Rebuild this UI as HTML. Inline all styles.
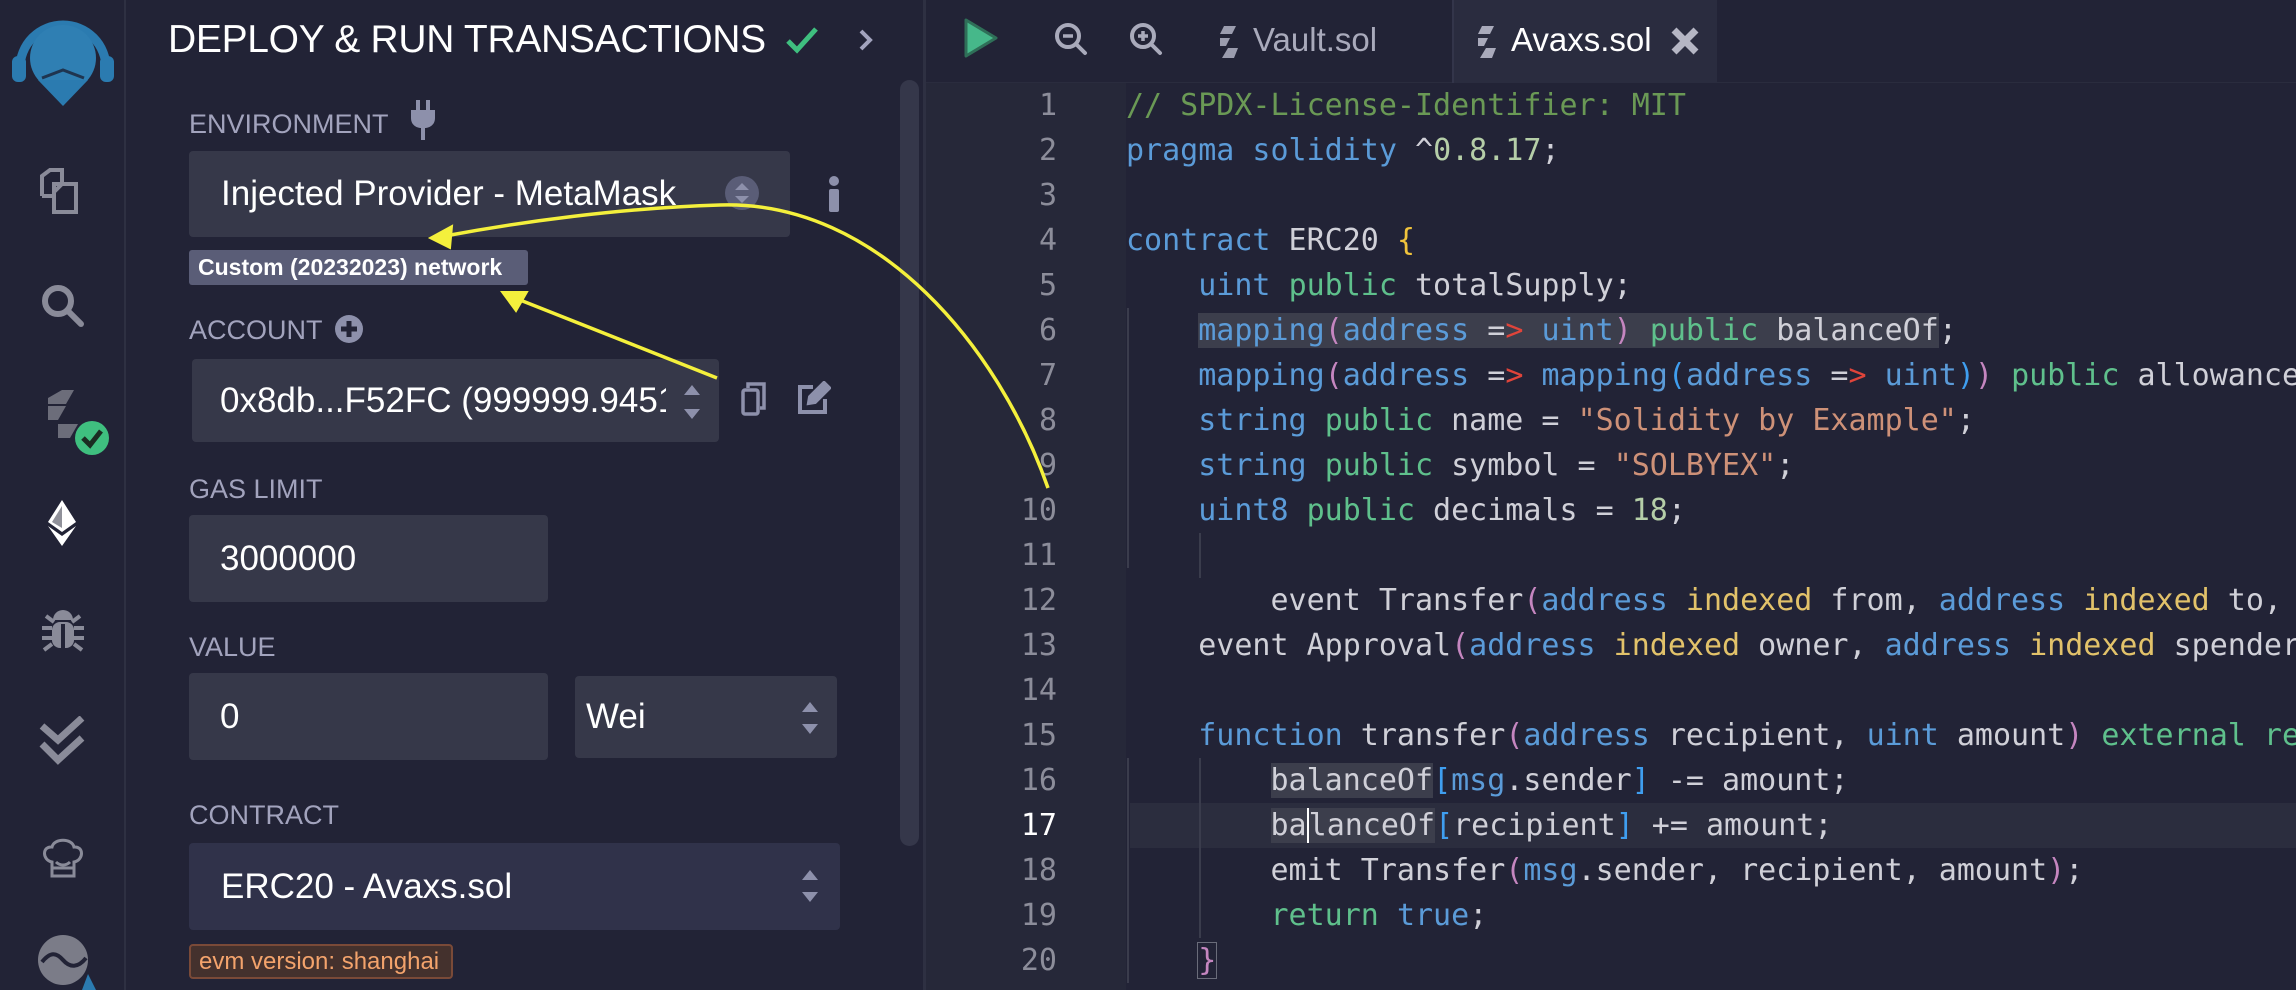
<!DOCTYPE html>
<html><head><meta charset="utf-8">
<style>
*{margin:0;padding:0;box-sizing:border-box}
body{width:2296px;height:990px;background:#222336;overflow:hidden;position:relative;font-family:"Liberation Sans",sans-serif;color:#fff}
.abs{position:absolute}
.lbl{position:absolute;left:189px;font-size:27px;color:#a2a3bd;line-height:30px}
.box{position:absolute;background:#363849;border-radius:4px;color:#fff;font-size:35px;display:flex;align-items:center;white-space:nowrap;overflow:hidden}
#code{position:absolute;left:1126px;top:83px;font-family:"DejaVu Sans Mono","Liberation Mono",monospace;font-size:30px;line-height:45px;white-space:pre;color:#d0d0d8}
#nums{position:absolute;left:925px;width:132px;top:83px;font-family:"DejaVu Sans Mono","Liberation Mono",monospace;font-size:30px;line-height:45px;text-align:right;color:#8c8d9a;white-space:pre}
.k{color:#5b9bd8}.g{color:#5fc08c}.c{color:#6a9955}.n{color:#b5cea8}.s{color:#ce9178}.y{color:#e2c26a}.p{color:#c586c0}.b{color:#3f9ef0}.r{color:#e0443a}.br{color:#f0c33c}
.hl{background:#3c3e4c}
</style></head><body>
<div class="abs" style="left:0;top:0;width:126px;height:990px;background:#222336;border-right:2px solid #2e3042"></div>
<svg class="abs" style="left:8px;top:8px" width="110" height="100" viewBox="0 0 110 100">
<path d="M12 60 A43 43 0 1 1 98 60" fill="none" stroke="#2b7bb0" stroke-width="9"/>
<rect x="4" y="48" width="14" height="26" rx="6" fill="#2b7bb0"/><rect x="92" y="48" width="14" height="26" rx="6" fill="#2b7bb0"/>
<circle cx="55" cy="50" r="33" fill="#2f7fb3"/>
<path d="M30 72 L55 98 L80 72 Z" fill="#2b7bb0"/>
<path d="M34 70 L55 62 L76 70" fill="none" stroke="#1f3550" stroke-width="3"/>
</svg>
<svg class="abs" style="left:38px;top:168px" width="50" height="46" viewBox="0 0 50 46" fill="none" stroke="#8a8b99" stroke-width="4"><path d="M4 28 V8 L12 2 H24 V14 M4 28 H14"/><path d="M16 16 H38 V44 H16 Z M16 24 L24 16"/></svg>
<svg class="abs" style="left:40px;top:283px" width="46" height="46" viewBox="0 0 46 46" fill="none" stroke="#8a8b99" stroke-width="6"><circle cx="18" cy="18" r="13"/><path d="M28 28 L41 41" stroke-linecap="round"/></svg>
<svg class="abs" style="left:44px;top:390px" width="70" height="70" viewBox="0 0 70 70"><path d="M4 8 L18 0 H30 L22 14 H4Z M4 16 H22 L14 30 H4Z M14 34 H34 L26 48 H14Z" fill="#6c6d7a"/><circle cx="48" cy="48" r="17" fill="#3fbf7f"/><path d="M39 48 L46 55 L57 41" fill="none" stroke="#1b2d22" stroke-width="5"/></svg>
<svg class="abs" style="left:38px;top:498px" width="50" height="50" viewBox="0 0 50 50" fill="#fff"><path d="M24 2 L38 24 L24 34 L10 24Z"/><path d="M10 28 L24 38 L38 28 L24 48Z"/><path d="M24 8 L24 30 L14 24Z" fill="#222336" opacity=".5"/></svg>
<svg class="abs" style="left:40px;top:606px" width="46" height="48" viewBox="0 0 46 48" fill="#8a8b99"><path d="M13 14 A10 10 0 0 1 33 14Z"/><rect x="12" y="16" width="22" height="26" rx="8"/><path d="M2 22 H12 M34 22 H44 M2 32 H12 M34 32 H44 M4 44 L12 38 M42 44 L34 38 M6 10 L14 16 M40 10 L32 16" stroke="#8a8b99" stroke-width="4"/><rect x="21" y="18" width="4" height="24" fill="#222336"/></svg>
<svg class="abs" style="left:38px;top:716px" width="50" height="50" viewBox="0 0 50 50" fill="none" stroke="#8a8b99" stroke-width="7" stroke-linejoin="miter"><path d="M4 10 L20 24 L44 2"/><path d="M4 28 L20 44 L44 22"/></svg>
<svg class="abs" style="left:40px;top:836px" width="46" height="42" viewBox="0 0 46 42" fill="none" stroke="#8a8b99" stroke-width="3"><path d="M12 26 C2 24 2 10 12 11 C14 2 32 2 34 11 C44 10 44 24 34 26 V40 H12 Z"/><path d="M12 32 H34 M16 26 C20 30 26 30 30 26"/></svg>
<svg class="abs" style="left:38px;top:930px" width="60" height="60" viewBox="0 0 60 60"><circle cx="25" cy="30" r="25" fill="#7b7c88"/><path d="M4 32 C12 22 18 22 25 30 C32 38 40 38 48 28" stroke="#222336" stroke-width="4" fill="none"/><path d="M44 60 L50 44 L58 60Z" fill="#2b7bb0"/></svg>

<div class="abs" style="left:168px;top:17px;font-size:39px;line-height:46px;letter-spacing:-0.3px;white-space:nowrap">DEPLOY &amp; RUN TRANSACTIONS</div>
<svg class="abs" style="left:785px;top:26px" width="34" height="28" viewBox="0 0 34 28"><path d="M3 15 L12 24 L31 3" fill="none" stroke="#3fbf7f" stroke-width="5"/></svg>
<svg class="abs" style="left:858px;top:28px" width="16" height="24" viewBox="0 0 16 24"><path d="M3 3 L12 12 L3 21" fill="none" stroke="#a2a3bd" stroke-width="4"/></svg>
<div class="abs" style="left:900px;top:80px;width:19px;height:766px;background:#35374a;border-radius:10px"></div>

<div class="lbl" style="top:109px">ENVIRONMENT</div>
<svg class="abs" style="left:410px;top:100px" width="26" height="40" viewBox="0 0 26 40" fill="#8d90ab"><rect x="6" y="0" width="4" height="10"/><rect x="16" y="0" width="4" height="10"/><path d="M1 10 H25 V18 C25 26 18 28 15 28 V40 H11 V28 C8 28 1 26 1 18Z"/></svg>
<div class="box" style="left:189px;top:151px;width:601px;height:86px;padding-left:32px">Injected Provider - MetaMask</div>
<svg class="abs" style="left:725px;top:176px" width="34" height="34" viewBox="0 0 34 34"><circle cx="17" cy="17" r="17" fill="#5a5d77"/><path d="M10 14 L17 7 L24 14Z M10 20 L17 27 L24 20Z" fill="#8d90ab"/></svg>
<svg class="abs" style="left:826px;top:176px" width="16" height="36" viewBox="0 0 16 36" fill="#8d90ab"><circle cx="8" cy="5" r="5"/><rect x="3" y="13" width="10" height="23" rx="2"/></svg>
<div class="abs" style="left:189px;top:250px;width:339px;height:35px;background:#5a5d77;border-radius:3px;font-size:23px;font-weight:bold;line-height:35px;padding-left:9px;white-space:nowrap;overflow:hidden">Custom (20232023) network</div>

<div class="lbl" style="top:315px">ACCOUNT</div>
<svg class="abs" style="left:334px;top:314px" width="30" height="30" viewBox="0 0 30 30"><circle cx="15" cy="15" r="14" fill="#8d90ab"/><path d="M15 7 V23 M7 15 H23" stroke="#222336" stroke-width="5"/></svg>
<div class="box" style="left:192px;top:359px;width:527px;height:83px;padding-left:28px"><span style="width:446px;overflow:hidden;display:inline-block">0x8db...F52FC (999999.9451)</span></div>
<svg class="abs" style="left:682px;top:383px" width="20" height="38" viewBox="0 0 20 38" fill="#8d90ab"><path d="M2 12 L10 2 L18 12Z M2 26 L10 36 L18 26Z"/></svg>
<svg class="abs" style="left:740px;top:382px" width="28" height="34" viewBox="0 0 28 34" fill="none" stroke="#8d90ab" stroke-width="3.5"><path d="M8 6 V2 H24 V26 H20"/><rect x="3" y="8" width="15" height="24" rx="2"/></svg>
<svg class="abs" style="left:797px;top:381px" width="34" height="34" viewBox="0 0 34 34" fill="none" stroke="#8d90ab" stroke-width="4"><path d="M16 6 H3 V31 H28 V18"/><path d="M12 22 L13 16 L27 2 L32 7 L18 21Z" fill="#8d90ab"/></svg>

<div class="lbl" style="top:474px">GAS LIMIT</div>
<div class="box" style="left:189px;top:515px;width:359px;height:87px;padding-left:31px">3000000</div>
<div class="lbl" style="top:632px">VALUE</div>
<div class="box" style="left:189px;top:673px;width:359px;height:87px;padding-left:31px">0</div>
<div class="box" style="left:575px;top:676px;width:262px;height:82px;padding-left:11px">Wei</div>
<svg class="abs" style="left:800px;top:700px" width="20" height="36" viewBox="0 0 20 36" fill="#8d90ab"><path d="M2 12 L10 2 L18 12Z M2 24 L10 34 L18 24Z"/></svg>
<div class="lbl" style="top:800px">CONTRACT</div>
<div class="box" style="left:189px;top:843px;width:651px;height:87px;padding-left:32px;background:#30324a">ERC20 - Avaxs.sol</div>
<svg class="abs" style="left:800px;top:868px" width="20" height="36" viewBox="0 0 20 36" fill="#8d90ab"><path d="M2 12 L10 2 L18 12Z M2 24 L10 34 L18 24Z"/></svg>
<div class="abs" style="left:189px;top:944px;width:264px;height:35px;background:#44312d;border:2px solid #7a4a38;border-radius:4px;color:#f3a36c;font-size:24px;line-height:31px;padding-left:8px;white-space:nowrap;overflow:hidden">evm version: shanghai</div>

<div class="abs" style="left:923px;top:0;width:3px;height:990px;background:#2e3042"></div>
<div class="abs" style="left:926px;top:0;width:1370px;height:83px;background:#222336;border-bottom:1px solid #2a2c3e"></div>
<svg class="abs" style="left:963px;top:17px" width="36" height="42" viewBox="0 0 36 42"><path d="M3 3 L33 21 L3 39Z" fill="#46b88a" stroke="#2f6f58" stroke-width="3" stroke-linejoin="round"/></svg>
<svg class="abs" style="left:1054px;top:22px" width="34" height="34" viewBox="0 0 34 34" fill="none" stroke="#a9aabb" stroke-width="4"><circle cx="14" cy="14" r="11"/><path d="M22 22 L31 31" stroke-linecap="round"/><path d="M9 14 H19" stroke-width="3.5"/></svg>
<svg class="abs" style="left:1129px;top:22px" width="34" height="34" viewBox="0 0 34 34" fill="none" stroke="#a9aabb" stroke-width="4"><circle cx="14" cy="14" r="11"/><path d="M22 22 L31 31" stroke-linecap="round"/><path d="M9 14 H19 M14 9 V19" stroke-width="3.5"/></svg>
<svg class="abs" style="left:1218px;top:26px" width="22" height="32" viewBox="0 0 22 32" fill="#a9aabb"><path d="M6 0 H18 L14 8 H2Z M2 12 H12 L8 20 H2Z M10 22 H20 L16 32 H4Z" opacity=".9"/></svg>
<div class="abs" style="left:1253px;top:17px;font-size:33px;line-height:46px;color:#a9aabb">Vault.sol</div>
<div class="abs" style="left:1452px;top:0;width:265px;height:83px;background:#2a2c3f;border-left:2px solid #33354a"></div>
<svg class="abs" style="left:1476px;top:26px" width="22" height="32" viewBox="0 0 22 32" fill="#a9aabb"><path d="M6 0 H18 L14 8 H2Z M2 12 H12 L8 20 H2Z M10 22 H20 L16 32 H4Z"/></svg>
<div class="abs" style="left:1511px;top:17px;font-size:33px;line-height:46px;color:#fff">Avaxs.sol</div>
<svg class="abs" style="left:1670px;top:26px" width="30" height="30" viewBox="0 0 30 30"><path d="M4 4 L26 26 M26 4 L4 26" stroke="#b5b6c4" stroke-width="7"/></svg>

<div class="abs" style="left:926px;top:83px;width:200px;height:907px;background:#262839"></div>
<div class="abs" style="left:1130px;top:803px;width:1166px;height:45px;background:#2b2d3e"></div>
<div class="abs" style="left:1127px;top:308px;width:2px;height:260px;background:#3a3c4c"></div>
<div class="abs" style="left:1199px;top:533px;width:2px;height:45px;background:#3a3c4c"></div>
<div class="abs" style="left:1199px;top:758px;width:2px;height:180px;background:#3a3c4c"></div>
<div class="abs" style="left:1127px;top:758px;width:2px;height:225px;background:#3a3c4c"></div>

<div id="nums">1
2
3
4
5
6
7
8
9
10
11
12
13
14
15
16
<span style="color:#fff">17</span>
18
19
20</div>
<div id="code"><span class="c">// SPDX-License-Identifier: MIT</span>
<span class="k">pragma solidity</span> ^<span class="n">0.8.17</span>;

<span class="k">contract</span> ERC20 <span class="br">{</span>
    <span class="k">uint</span> <span class="g">public</span> totalSupply;
    <span class="hl"><span class="k">mapping</span><span class="p">(</span><span class="k">address</span> =<span class="r">&gt;</span> <span class="k">uint</span><span class="p">)</span> <span class="g">public</span> balanceOf</span>;
    <span class="k">mapping</span><span class="p">(</span><span class="k">address</span> =<span class="r">&gt;</span> <span class="k">mapping</span><span class="b">(</span><span class="k">address</span> =<span class="r">&gt;</span> <span class="k">uint</span><span class="b">)</span><span class="p">)</span> <span class="g">public</span> allowance;
    <span class="k">string</span> <span class="g">public</span> name = <span class="s">"Solidity by Example"</span>;
    <span class="k">string</span> <span class="g">public</span> symbol = <span class="s">"SOLBYEX"</span>;
    <span class="k">uint8</span> <span class="g">public</span> decimals = <span class="n">18</span>;

        event Transfer<span class="p">(</span><span class="k">address</span> <span class="y">indexed</span> from, <span class="k">address</span> <span class="y">indexed</span> to, <span class="k">uint</span> value<span class="p">)</span>;
    event Approval<span class="p">(</span><span class="k">address</span> <span class="y">indexed</span> owner, <span class="k">address</span> <span class="y">indexed</span> spender, <span class="k">uint</span> value<span class="p">)</span>;

    <span class="k">function</span> transfer<span class="p">(</span><span class="k">address</span> recipient, <span class="k">uint</span> amount<span class="p">)</span> <span class="g">external returns</span> <span class="p">(</span><span class="k">bool</span><span class="p">)</span> <span class="br">{</span>
        <span class="hl">balanceOf</span><span class="b">[</span><span class="k">msg</span>.sender<span class="b">]</span> -= amount;
        <span class="hl">ba<span style="border-left:2px solid #fff">l</span>anceOf</span><span class="b">[</span>recipient<span class="b">]</span> += amount;
        emit Transfer<span class="p">(</span><span class="k">msg</span>.sender, recipient, amount<span class="p">)</span>;
        <span class="g">return</span> <span class="k">true</span>;
    <span class="p" style="outline:1px solid #6a6c7a">}</span></div>

<svg class="abs" style="left:0;top:0" width="2296" height="990" viewBox="0 0 2296 990">
<path d="M1048 488 C1000 350 880 200 720 205 C620 208 520 222 445 236" fill="none" stroke="#f4f03c" stroke-width="3.5"/>
<path d="M430 238 L452 226 L450 248Z" fill="#f4f03c" stroke="#f4f03c" stroke-width="2"/>
<path d="M717 378 L515 298" fill="none" stroke="#f4f03c" stroke-width="3.5"/>
<path d="M502 292 L527 292 L516 311Z" fill="#f4f03c" stroke="#f4f03c" stroke-width="2"/>
</svg>
</body></html>
